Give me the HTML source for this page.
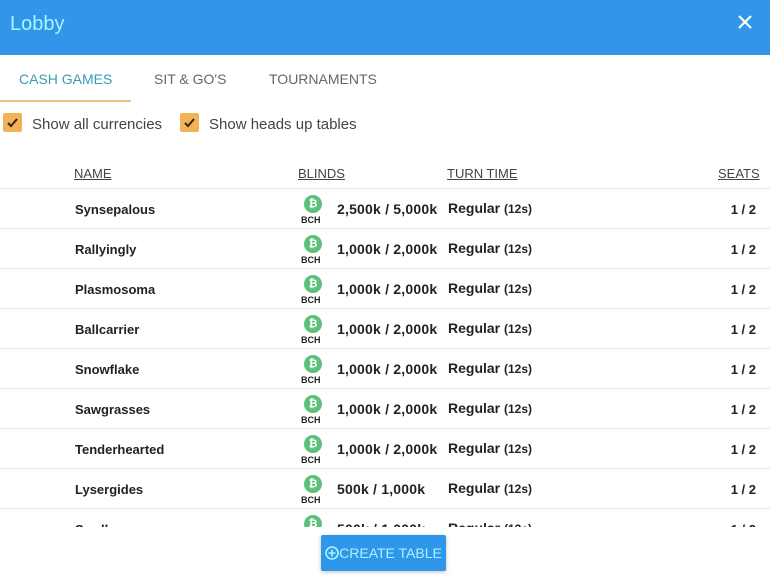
<!DOCTYPE html>
<html><head><style>
*{margin:0;padding:0;box-sizing:border-box}
body{width:770px;height:575px;overflow:hidden;background:#fff;font-family:"Liberation Sans",sans-serif;position:relative;color:#222}
.hdr{position:absolute;left:0;top:0;width:770px;height:55px;background:#3196ea}
.hdr .t{position:absolute;left:10px;top:13px;font-size:20px;color:#a8f4ff}
.hdr .x{position:absolute;left:737px;top:14px}
.tab{position:absolute;top:71px;font-size:14px;color:#666}
.ul{position:absolute;left:0;top:100px;width:131px;height:2px;background:#e8c27a}
.cb{position:absolute;top:113px;width:19px;height:19px;background:#f0b35a;border-radius:2px}
.cbl{position:absolute;top:116px;font-size:15px;color:#444}
.th{position:absolute;top:166px;font-size:13px;color:#444;text-decoration:underline}
.row{position:absolute;left:0;width:770px;height:40px;border-top:1px solid #e6e6e6}
.row .n{position:absolute;left:75px;top:13px;font-size:13px;font-weight:bold}
.row .b{position:absolute;left:337px;top:12px;font-size:14px;font-weight:bold;letter-spacing:0.2px}
.row .r{position:absolute;left:448px;top:11px;font-size:14px;font-weight:bold}
.row .r small{font-size:12px}
.row .s{position:absolute;right:14px;top:13px;font-size:13px;font-weight:bold}
.coin{position:absolute;left:304px;top:6px;width:18px;height:18px;border-radius:50%;background:#5dc07a;color:#fff;font-size:11px;font-weight:bold;text-align:center;line-height:18px}
.bch{position:absolute;left:301px;top:26px;font-size:9px;font-weight:bold}
.btn{position:absolute;left:321px;top:535px;width:125px;height:36px;background:#2f96ea;border-radius:2px;box-shadow:0 1px 4px rgba(0,0,0,.25);color:#a8f4ff;font-size:14px;line-height:36px;text-align:center}
</style></head><body>
<div class="hdr"><div class="t">Lobby</div>
<svg class="x" width="16" height="16" viewBox="0 0 16 16"><path d="M2 2L14 14M14 2L2 14" stroke="#fff" stroke-width="2.2"/></svg></div>
<div class="tab" style="left:19px;color:#3a9bb5">CASH GAMES</div>
<div class="tab" style="left:154px">SIT &amp; GO'S</div>
<div class="tab" style="left:269px">TOURNAMENTS</div>
<div class="ul"></div>
<div class="cb" style="left:3px"><svg width="19" height="19"><path d="M5 10L8 13L14 6" stroke="#3a2410" stroke-width="2" fill="none"/></svg></div>
<div class="cbl" style="left:32px">Show all currencies</div>
<div class="cb" style="left:180px"><svg width="19" height="19"><path d="M5 10L8 13L14 6" stroke="#3a2410" stroke-width="2" fill="none"/></svg></div>
<div class="cbl" style="left:209px">Show heads up tables</div>
<div class="th" style="left:74px">NAME</div>
<div class="th" style="left:298px">BLINDS</div>
<div class="th" style="left:447px">TURN TIME</div>
<div class="th" style="left:718px">SEATS</div>
<div class="row" style="top:188px"><div class="n">Synsepalous</div><div class="coin">₿</div><div class="bch">BCH</div><div class="b">2,500k / 5,000k</div><div class="r">Regular <small>(12s)</small></div><div class="s">1 / 2</div></div>
<div class="row" style="top:228px"><div class="n">Rallyingly</div><div class="coin">₿</div><div class="bch">BCH</div><div class="b">1,000k / 2,000k</div><div class="r">Regular <small>(12s)</small></div><div class="s">1 / 2</div></div>
<div class="row" style="top:268px"><div class="n">Plasmosoma</div><div class="coin">₿</div><div class="bch">BCH</div><div class="b">1,000k / 2,000k</div><div class="r">Regular <small>(12s)</small></div><div class="s">1 / 2</div></div>
<div class="row" style="top:308px"><div class="n">Ballcarrier</div><div class="coin">₿</div><div class="bch">BCH</div><div class="b">1,000k / 2,000k</div><div class="r">Regular <small>(12s)</small></div><div class="s">1 / 2</div></div>
<div class="row" style="top:348px"><div class="n">Snowflake</div><div class="coin">₿</div><div class="bch">BCH</div><div class="b">1,000k / 2,000k</div><div class="r">Regular <small>(12s)</small></div><div class="s">1 / 2</div></div>
<div class="row" style="top:388px"><div class="n">Sawgrasses</div><div class="coin">₿</div><div class="bch">BCH</div><div class="b">1,000k / 2,000k</div><div class="r">Regular <small>(12s)</small></div><div class="s">1 / 2</div></div>
<div class="row" style="top:428px"><div class="n">Tenderhearted</div><div class="coin">₿</div><div class="bch">BCH</div><div class="b">1,000k / 2,000k</div><div class="r">Regular <small>(12s)</small></div><div class="s">1 / 2</div></div>
<div class="row" style="top:468px"><div class="n">Lysergides</div><div class="coin">₿</div><div class="bch">BCH</div><div class="b">500k / 1,000k</div><div class="r">Regular <small>(12s)</small></div><div class="s">1 / 2</div></div>
<div class="row" style="top:508px;height:19px;overflow:hidden"><div class="n">Swallower</div><div class="coin">₿</div><div class="b">500k / 1,000k</div><div class="r">Regular <small>(12s)</small></div><div class="s">1 / 2</div></div>
<div class="btn"><svg width="14" height="14" viewBox="0 0 14 14" style="vertical-align:-2px"><circle cx="7" cy="7" r="6" stroke="#a8f4ff" stroke-width="1.6" fill="none"/><path d="M7 3.5V10.5M3.5 7H10.5" stroke="#a8f4ff" stroke-width="1.6"/></svg>CREATE TABLE</div>
</body></html>
